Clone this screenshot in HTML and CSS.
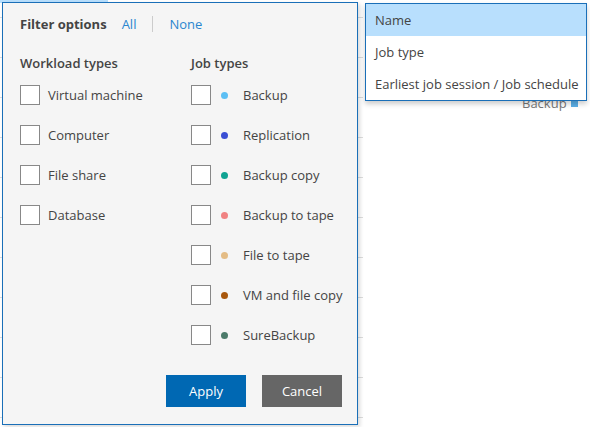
FILE: index.html
```html
<!DOCTYPE html>
<html>
<head>
<meta charset="utf-8">
<link rel="stylesheet" href="styles.css">
</head>
<body>
<div class="backdrop">
  <div class="bg-head"><div class="bg-sel"></div></div>
  <div class="bg-row"></div>
  <div class="bg-row"></div>
  <div class="bg-row"></div>
  <div class="bg-row"></div>
  <div class="bg-row"></div>
  <div class="bg-row"></div>
  <div class="bg-row"></div>
  <div class="bg-row"></div>
  <div class="bg-row"></div>
  <div class="bg-row"></div>
</div>

<div class="panel">
  <div class="panel-head">
    <span class="title">Filter options</span>
    <a class="link">All</a>
    <span class="sep"></span>
    <a class="link">None</a>
  </div>
  <div class="cols">
    <div class="col col-work">
      <div class="col-title">Workload types</div>
      <label class="opt"><span class="box"></span><span class="lbl">Virtual machine</span></label>
      <label class="opt"><span class="box"></span><span class="lbl">Computer</span></label>
      <label class="opt"><span class="box"></span><span class="lbl">File share</span></label>
      <label class="opt"><span class="box"></span><span class="lbl">Database</span></label>
    </div>
    <div class="col col-job">
      <div class="col-title">Job types</div>
      <label class="opt"><span class="box"></span><span class="dot d-backup"></span><span class="lbl">Backup</span></label>
      <label class="opt"><span class="box"></span><span class="dot d-repl"></span><span class="lbl">Replication</span></label>
      <label class="opt"><span class="box"></span><span class="dot d-copy"></span><span class="lbl">Backup copy</span></label>
      <label class="opt"><span class="box"></span><span class="dot d-tape"></span><span class="lbl">Backup to tape</span></label>
      <label class="opt"><span class="box"></span><span class="dot d-ftape"></span><span class="lbl">File to tape</span></label>
      <label class="opt"><span class="box"></span><span class="dot d-vm"></span><span class="lbl">VM and file copy</span></label>
      <label class="opt"><span class="box"></span><span class="dot d-sure"></span><span class="lbl">SureBackup</span></label>
    </div>
  </div>
  <div class="actions">
    <button class="btn btn-apply">Apply</button>
    <button class="btn btn-cancel">Cancel</button>
  </div>
</div>

<div class="legend">Backup <span class="legend-sq"></span></div>

<div class="menu">
  <div class="item active">Name</div>
  <div class="item">Job type</div>
  <div class="item">Earliest job session / Job schedule</div>
</div>
</body>
</html>
```

FILE: styles.css
```css
html, body {
  margin: 0;
  padding: 0;
}
body {
  width: 590px;
  height: 427px;
  overflow: hidden;
  position: relative;
  background: #fff;
  font-family: "Open Sans", "Noto Sans", sans-serif;
  font-size: 13px;
  color: #444;
}

/* underlying page (mostly hidden) */
.backdrop {
  display: flex;
  flex-direction: column;
  width: 363px;
  height: 427px;
  overflow: hidden;
}
.bg-head {
  height: 18px;
  flex: none;
  border-bottom: 1px solid #ddd;
  box-sizing: border-box;
}
.bg-sel {
  width: 108px;
  height: 3px;
  background: #b8dffd;
}
.bg-row {
  height: 40px;
  flex: none;
  border-bottom: 1px solid #ddd;
  box-sizing: border-box;
}

.legend {
  position: absolute;
  left: 522px;
  top: 94px;
  font-size: 13px;
  color: #777;
  display: flex;
  align-items: center;
  gap: 4px;
}
.legend-sq {
  width: 7px;
  height: 7px;
  background: #5aaee6;
}

/* filter popup */
.panel {
  position: absolute;
  left: 2px;
  top: 2px;
  width: 356px;
  height: 423px;
  box-sizing: border-box;
  background: #f5f5f5;
  border: 1px solid #1a6fb8;
  box-shadow: 2px 2px 4px rgba(0,0,0,0.15);
  padding: 0 15px 0 17px;
  display: flex;
  flex-direction: column;
}
.panel-head {
  display: flex;
  align-items: center;
  height: 41px;
  flex: none;
}
.title {
  font-weight: 700;
  color: #444;
  margin-right: 15px;
}
.link {
  color: #2a86cf;
  cursor: pointer;
}
.sep {
  width: 1px;
  height: 16px;
  background: #ccc;
  margin: 0 16px 0 16px;
}
.cols {
  display: flex;
  margin-top: 7px;
}
.col {
  display: flex;
  flex-direction: column;
}
.col-work {
  width: 171px;
  flex: none;
}
.col-title {
  font-weight: 600;
  color: #444;
  height: 24px;
  line-height: 24px;
  white-space: nowrap;
}
.opt {
  display: flex;
  align-items: center;
  height: 40px;
  white-space: nowrap;
}
.box {
  width: 18px;
  height: 18px;
  border: 1px solid #888;
  background: #fff;
  flex: none;
}
.col-work .box {
  margin-right: 8px;
}
.col-job .box {
  margin-right: 10px;
}
.dot {
  width: 7px;
  height: 7px;
  border-radius: 50%;
  margin-right: 15px;
  flex: none;
}
.d-backup { background: #5cbff4; }
.d-repl { background: #3a4fd4; }
.d-copy { background: #0fa392; }
.d-tape { background: #f08282; }
.d-ftape { background: #e4bc85; }
.d-vm { background: #a8570d; }
.d-sure { background: #4c7b6a; }
.lbl {
  color: #444;
}
.actions {
  display: flex;
  justify-content: flex-end;
  gap: 16px;
  margin-top: 20px;
}
.btn {
  width: 80px;
  height: 32px;
  border: none;
  font-family: inherit;
  font-size: 13px;
  color: #fff;
  padding: 0;
  cursor: pointer;
}
.btn-apply { background: #0068b3; }
.btn-cancel { background: #666; }

/* sort menu */
.menu {
  position: absolute;
  left: 365px;
  top: 3px;
  width: 222px;
  box-sizing: border-box;
  background: #fff;
  border: 1px solid #1a6fb8;
  box-shadow: 0 3px 5px rgba(0,0,0,0.2);
}
.item {
  height: 32px;
  line-height: 32px;
  padding-left: 9px;
  white-space: nowrap;
  color: #444;
}
.item.active {
  background: #b8dffd;
}
```
